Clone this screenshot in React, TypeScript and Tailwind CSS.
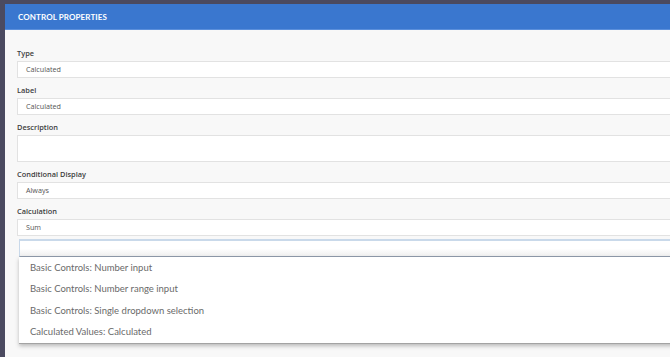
import React from "react";

const labelCls =
  "block h-[12px] leading-[12px] text-[7.4px] font-semibold text-[#3d3d3d] mt-[6px] mb-[2px]";
const inputCls =
  "h-[17px] w-[700px] bg-white border-y border-l border-[#e2e2e2] flex items-center pl-[8px] text-[7.2px] text-[#555]";

function Field({ label, value, first }: { label: string; value: string; first?: boolean }) {
  return (
    <div>
      <div className={labelCls + (first ? " !mt-0" : "")}>{label}</div>
      <div className={inputCls}>{value}</div>
    </div>
  );
}

export default function App() {
  const items = [
    "Basic Controls: Number input",
    "Basic Controls: Number range input",
    "Basic Controls: Single dropdown selection",
    "Calculated Values: Calculated",
  ];
  return (
    <div
      className="w-[670px] h-[357px] overflow-hidden bg-[#4b4a60] pt-[4px] pl-[5px]"
      style={{ fontFamily: "'Open Sans', 'Liberation Sans', sans-serif" }}
    >
      <div className="w-[700px] h-[360px] bg-[#f8f8f8] flex flex-col">
        <div
          className="h-[26px] shrink-0 bg-[#3a77cf] border-b border-[#5b8fdb] flex items-center pl-[13px] text-white text-[8px] font-bold tracking-[0.1px]"
          style={{ fontFamily: "Lato, 'Open Sans', sans-serif" }}
        >
          CONTROL PROPERTIES
        </div>
        <div className="pl-[12px] pt-[17px] flex flex-col">
          <Field label="Type" value="Calculated" first />
          <Field label="Label" value="Calculated" />
          <div>
            <div className={labelCls}>Description</div>
            <div className="h-[27px] w-[700px] bg-white border-y border-l border-[#e2e2e2]" />
          </div>
          <Field label="Conditional Display" value="Always" />
          <Field label="Calculation" value="Sum" />
          <div className="ml-[2px] mt-[3px] relative">
            <div className="h-[18px] w-[700px] bg-white border-t-2 border-l border-[#c9d9ea] border-b border-b-[#8f9bab] bg-gradient-to-b from-white via-white to-[#efefef]" />
            <div
              className="w-[700px] bg-white border-b border-[#a3a3a3] shadow-[0_2px_4px_rgba(0,0,0,0.25)] flex flex-col"
              style={{ fontFamily: "Lato, 'Open Sans', sans-serif" }}
            >
              {items.map((t) => (
                <div
                  key={t}
                  className="h-[21.5px] flex items-center pl-[11px] text-[9.5px] text-[#6a6a6a]"
                >
                  {t}
                </div>
              ))}
            </div>
          </div>
        </div>
      </div>
    </div>
  );
}
